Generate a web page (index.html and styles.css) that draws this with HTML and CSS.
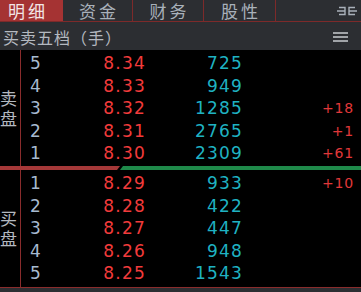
FILE: index.html
```html
<!DOCTYPE html>
<html lang="zh-CN">
<head>
    <meta charset="UTF-8">
    <title>买卖五档</title>
    <link rel="stylesheet" href="styles.css">
</head>
<body>
<div class="panel">
    <div class="tabs">
        <div class="tab tab-first active">明细</div>
        <div class="tab tab-2">资金</div>
        <div class="tab tab-3">财务</div>
        <div class="tab tab-4">股性</div>
        <div class="tab tab-last">
            <svg class="fold" width="20" height="10" viewBox="0 0 20 10">
                <path d="M2 1.5H8V8.5H2M0 5H8M18 1.5H12V8.5H18M12 5H20" fill="none" stroke="#a9b1ba" stroke-width="1.4"/>
            </svg>
        </div>
    </div>
    <div class="head">
        <span class="head-title">买卖五档（手）</span>
        <svg class="menu" width="15" height="10" viewBox="0 0 15 10">
            <path d="M0 1H15M0 5H15M0 9H15" stroke="#c8cbd0" stroke-width="1.4"/>
        </svg>
    </div>
    <div class="book">
        <div class="side sell">
            <div class="label"><span class="label-text">卖盘</span></div>
            <div class="rows">
                <div class="row"><span class="lv">5</span><span class="price">8.34</span><span class="vol">725</span><span class="chg"></span></div>
                <div class="row"><span class="lv">4</span><span class="price">8.33</span><span class="vol">949</span><span class="chg"></span></div>
                <div class="row"><span class="lv">3</span><span class="price">8.32</span><span class="vol">1285</span><span class="chg">+18</span></div>
                <div class="row"><span class="lv">2</span><span class="price">8.31</span><span class="vol">2765</span><span class="chg">+1</span></div>
                <div class="row"><span class="lv">1</span><span class="price">8.30</span><span class="vol">2309</span><span class="chg">+61</span></div>
            </div>
        </div>
        <div class="split">
            <div class="split-red"></div>
            <div class="split-green"></div>
        </div>
        <div class="side buy">
            <div class="label"><span class="label-text">买盘</span></div>
            <div class="rows">
                <div class="row"><span class="lv">1</span><span class="price">8.29</span><span class="vol">933</span><span class="chg">+10</span></div>
                <div class="row"><span class="lv">2</span><span class="price">8.28</span><span class="vol">422</span><span class="chg"></span></div>
                <div class="row"><span class="lv">3</span><span class="price">8.27</span><span class="vol">447</span><span class="chg"></span></div>
                <div class="row"><span class="lv">4</span><span class="price">8.26</span><span class="vol">948</span><span class="chg"></span></div>
                <div class="row"><span class="lv">5</span><span class="price">8.25</span><span class="vol">1543</span><span class="chg"></span></div>
            </div>
        </div>
    </div>
</div>
</body>
</html>
```

FILE: styles.css
```css
body {
    margin: 0;
    background: #2c2e32;
    font-family: "DejaVu Sans", "Noto Sans CJK SC", sans-serif;
}

.panel {
    width: 361px;
    height: 292px;
    overflow: hidden;
    background: #2c2e32;
}

/* tab bar */
.tabs {
    display: flex;
    height: 21px;
    border-bottom: 1px solid #7d2a2a;
}

.tab {
    flex: none;
    box-sizing: border-box;
    border-right: 1px solid #7d2a2a;
    color: #a9b1ba;
    font: 17px/21px "Noto Sans CJK SC", sans-serif;
    letter-spacing: 3px;
    padding-left: 3px;
    text-align: center;
}

.tab-first {
    width: 63px;
    border-right: none;
    text-align: left;
    padding-left: 8px;
}

.tab-2 {
    width: 70px;
}

.tab-3 {
    width: 71px;
}

.tab-4 {
    width: 72px;
}

.tab-last {
    flex: 1;
    border-right: none;
    display: flex;
    align-items: center;
    justify-content: flex-end;
    padding-right: 4px;
}

.tab.active {
    background: #a53333;
    color: #f2e6e6;
}

/* title row */
.head {
    display: flex;
    align-items: center;
    justify-content: space-between;
    height: 28px;
    box-sizing: border-box;
    padding: 2px 13px 0 3px;
}

.head-title {
    color: #b4b9c0;
    font: 16px/20px "Noto Sans CJK SC", sans-serif;
    letter-spacing: 1px;
}

/* order book */
.book {
    background: #000;
    border-bottom: 1px solid #8a2c2c;
}

.side {
    display: flex;
}

.label {
    width: 20px;
    box-sizing: border-box;
    padding-right: 3px;
    display: flex;
    align-items: center;
    justify-content: center;
}

.label-text {
    writing-mode: vertical-rl;
    color: #b4b9c0;
    font: 17px/17px "Noto Sans CJK SC", sans-serif;
    letter-spacing: 3px;
    margin-top: 3px;
}

.rows {
    flex: 1;
    border-left: 1px solid #8a2c2c;
    padding: 2px 7px 1.5px 9px;
}

.buy .rows {
    padding: 2px 7px 2.5px 9px;
}

.row {
    display: grid;
    grid-template-columns: 40px 76px 97px 111px;
    height: 22.5px;
    line-height: 22.5px;
    font-size: 17px;
    letter-spacing: 1.2px;
}

.lv {
    color: #a7bad0;
}

.price {
    color: #f23b3b;
    text-align: right;
}

.vol {
    color: #1fb2c2;
    text-align: right;
}

.chg {
    color: #e0383a;
    font-size: 14px;
    letter-spacing: 0.8px;
    text-align: right;
}

.split {
    display: flex;
    height: 4px;
}

.split-red {
    width: 120px;
    background: #a53838;
    clip-path: polygon(0 0, 100% 0, calc(100% - 3px) 100%, 0 100%);
}

.split-green {
    flex: 1;
    background: #1f8a4a;
    clip-path: polygon(3px 0, 100% 0, 100% 100%, 0 100%);
}
```
